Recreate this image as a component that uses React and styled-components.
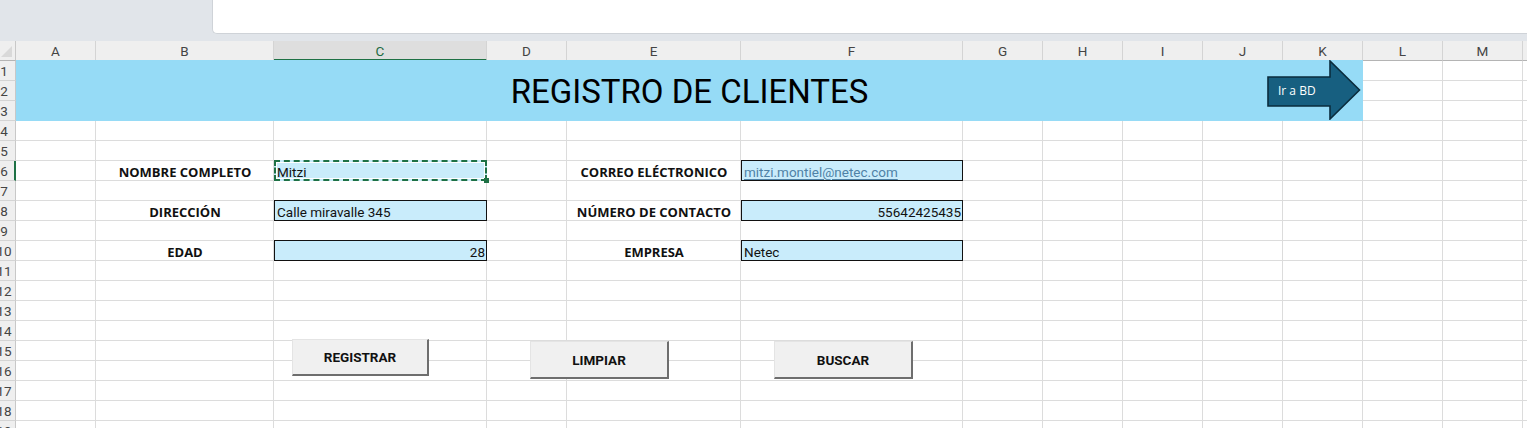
import * as React from 'react';
import styled, { createGlobalStyle, css } from 'styled-components';

const COLS = ['A', 'B', 'C', 'D', 'E', 'F', 'G', 'H', 'I', 'J', 'K', 'L', 'M', 'N'];
const WIDTHS = [80, 178, 213, 80, 174, 222, 80, 80, 80, 80, 80, 80, 80, 80];
const ROWS = 19;
const GRID = '#dcdcdc';
const GREEN = '#1e7145';

// grid column of a sheet letter (column 1 holds the row numbers)
const colOf = (letter) => COLS.indexOf(letter) + 2;

const GlobalStyle = createGlobalStyle`
	html, body {
		margin: 0;
		padding: 0;
		background: #ffffff;
	}
	body {
		font-family: Roboto, "Liberation Sans", sans-serif;
	}
`;

const Window = styled.div`
	width: 1527px;
	height: 428px;
	overflow: hidden;
	background: #e1e5ea;
`;

const FormulaArea = styled.div`
	height: 41px;
	display: flex;
	align-items: flex-start;
	padding-left: 212px;
	box-sizing: border-box;
`;

const FormulaBox = styled.div`
	flex: 1;
	height: 34px;
	background: #ffffff;
	border-left: 1px solid #cfd3d8;
	border-bottom: 1px solid #cfd3d8;
	border-bottom-left-radius: 5px;
	box-sizing: border-box;
`;

const Sheet = styled.div`
	position: relative;
	display: grid;
	grid-template-columns: 16px ${WIDTHS.map((w) => `${w}px`).join(' ')};
	grid-template-rows: repeat(${ROWS + 1}, 20px);
	background: #ffffff;
`;

const Corner = styled.div`
	grid-row: 1;
	grid-column: 1;
	background: #efefef;
	border-right: 1px solid #c8c8c8;
	border-bottom: 1px solid #b4b4b4;
	position: relative;

	&::after {
		content: '';
		position: absolute;
		right: 3px;
		bottom: 3px;
		width: 11px;
		height: 11px;
		background: #d9d9d9;
		clip-path: polygon(100% 0, 100% 100%, 0 100%);
	}
`;

const ColHeader = styled.div`
	grid-row: 1;
	background: ${({ $active }) => ($active ? '#dedede' : '#efefef')};
	border-right: 1px solid #d4d4d4;
	border-bottom: ${({ $active }) => ($active ? `2px solid ${GREEN}` : '1px solid #b4b4b4')};
	box-sizing: border-box;
	display: flex;
	align-items: center;
	justify-content: center;
	font-size: 13.5px;
	color: ${({ $active }) => ($active ? '#1d6b43' : '#444444')};
	padding-top: 1px;
`;

const RowHeader = styled.div`
	grid-column: 1;
	background: #efefef;
	border-right: ${({ $active }) => ($active ? `2px solid ${GREEN}` : '1px solid #c8c8c8')};
	border-bottom: 1px solid #d4d4d4;
	box-sizing: border-box;
	overflow: hidden;
	display: flex;
	align-items: center;
	font-size: 13.5px;
	color: #444444;

	span {
		flex: none;
		width: 24px;
		margin-left: -8px;
		text-align: center;
	}
`;

const Cell = styled.div`
	border-right: 1px solid ${GRID};
	border-bottom: 1px solid ${GRID};
	box-sizing: border-box;
`;

const Banner = styled.div`
	grid-row: 2 / span 3;
	grid-column: 2 / span 11;
	background: #96dbf6;
	position: relative;
	display: flex;
	align-items: center;
	justify-content: center;
	margin-top: -1px;
	height: calc(100% + 1px);
`;

const Title = styled.h1`
	margin: 0;
	font-family: Roboto, "Liberation Sans", sans-serif;
	font-weight: 400;
	font-size: 33px;
	color: #000000;
	padding-top: 2px;
`;

const ArrowShape = styled.svg`
	position: absolute;
	right: 2px;
	top: 0;
`;

const Label = styled.div`
	display: flex;
	align-items: center;
	justify-content: center;
	white-space: nowrap;
	font-family: "Open Sans", "Liberation Sans", sans-serif;
	font-weight: 700;
	font-size: 13px;
	color: #111111;
	padding-top: 1px;
`;

const Value = styled.div`
	margin-top: -1px;
	height: calc(100% + 1px);
	background: #c9ecfb;
	border: 1px solid #111111;
	box-sizing: border-box;
	display: flex;
	align-items: center;
	justify-content: ${({ $right }) => ($right ? 'flex-end' : 'flex-start')};
	padding: 2px 1px 0 2px;
	white-space: nowrap;
	font-size: 13.5px;
	color: #111111;
	position: relative;

	${({ $link }) =>
		$link &&
		css`
			span {
				color: #4f82a6;
				text-decoration: underline;
				text-underline-offset: 2px;
			}
		`}

	${({ $selected }) =>
		$selected &&
		css`
			border: 2px dashed ${GREEN};
			outline: 1px solid #ffffff;
			outline-offset: -3px;
			padding-left: 1px;

			&::after {
				content: '';
				position: absolute;
				right: -4px;
				bottom: -4px;
				width: 5px;
				height: 5px;
				background: ${GREEN};
			}
		`}
`;

const FormButton = styled.button`
	position: absolute;
	left: ${({ $x }) => $x}px;
	top: ${({ $y }) => $y}px;
	width: ${({ $w }) => $w}px;
	height: ${({ $h }) => $h}px;
	background: #f0f0f0;
	border: none;
	border-top: 1px solid #e4e4e4;
	border-left: 1px solid #e4e4e4;
	border-right: 2px solid #6e6e6e;
	border-bottom: 2px solid #6e6e6e;
	box-sizing: border-box;
	font-family: Roboto, "Liberation Sans", sans-serif;
	font-weight: 700;
	font-size: 13.5px;
	color: #111111;
	padding: 0;
	cursor: pointer;
`;

const fields = [
	{ row: 6, label: 'NOMBRE COMPLETO', value: 'Mitzi', selected: true, col: 'B' },
	{ row: 8, label: 'DIRECCIÓN', value: 'Calle miravalle 345', col: 'B' },
	{ row: 10, label: 'EDAD', value: '28', right: true, col: 'B' },
	{ row: 6, label: 'CORREO ELÉCTRONICO', value: 'mitzi.montiel@netec.com', link: true, col: 'E' },
	{ row: 8, label: 'NÚMERO DE CONTACTO', value: '55642425435', right: true, col: 'E' },
	{ row: 10, label: 'EMPRESA', value: 'Netec', col: 'E' },
];

const buttons = [
	{ text: 'REGISTRAR', x: 292, y: 298, w: 137, h: 37 },
	{ text: 'LIMPIAR', x: 530, y: 300, w: 139, h: 38 },
	{ text: 'BUSCAR', x: 774, y: 300, w: 139, h: 38 },
];

function GoArrow() {
	return (
		<ArrowShape width="94" height="60" viewBox="0 0 94 60">
			<polygon
				points="1,17 63,17 63,1 92.5,30 63,59 63,46 1,46"
				fill="#175f80"
				stroke="#0a2c3d"
				strokeWidth="1.6"
			/>
			<text x="11" y="35" fill="#ffffff" fontSize="12" fontFamily="'Open Sans', 'Liberation Sans', sans-serif">
				Ir a BD
			</text>
		</ArrowShape>
	);
}

export default function App() {
	const cells = [];
	for (let r = 1; r <= ROWS; r++) {
		for (let c = 1; c <= COLS.length; c++) {
			cells.push(<Cell key={`${r}-${c}`} style={{ gridRow: r + 1, gridColumn: c + 1 }} />);
		}
	}

	return (
		<>
			<GlobalStyle />
			<Window>
				<FormulaArea>
					<FormulaBox />
				</FormulaArea>
				<Sheet>
					<Corner />
					{COLS.map((name) => (
						<ColHeader key={name} $active={name === 'C'} style={{ gridColumn: colOf(name) }}>
							{name}
						</ColHeader>
					))}
					{Array.from({ length: ROWS }, (_, i) => (
						<RowHeader key={i} $active={i + 1 === 6} style={{ gridRow: i + 2 }}>
							<span>{i + 1}</span>
						</RowHeader>
					))}
					{cells}
					<Banner>
						<Title>REGISTRO DE CLIENTES</Title>
						<GoArrow />
					</Banner>
					{fields.map((f) => (
						<React.Fragment key={f.label}>
							<Label style={{ gridRow: f.row + 1, gridColumn: colOf(f.col) }}>{f.label}</Label>
							<Value
								style={{ gridRow: f.row + 1, gridColumn: colOf(f.col) + 1 }}
								$right={f.right}
								$link={f.link}
								$selected={f.selected}
							>
								<span>{f.value}</span>
							</Value>
						</React.Fragment>
					))}
					{buttons.map((b) => (
						<FormButton key={b.text} $x={b.x} $y={b.y} $w={b.w} $h={b.h}>
							{b.text}
						</FormButton>
					))}
				</Sheet>
			</Window>
		</>
	);
}
